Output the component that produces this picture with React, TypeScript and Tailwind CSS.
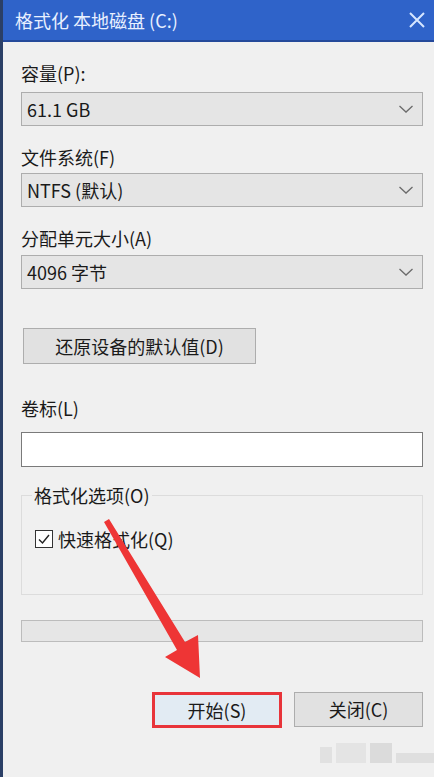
const font = { fontFamily: '"Noto Sans CJK SC", "Noto Sans", sans-serif' };

function Chevron() {
  return (
    <svg width="16" height="10" viewBox="0 0 16 10">
      <path d="M1.5 2 L8 8 L14.5 2" fill="none" stroke="#6b6b6b" strokeWidth="1.3" />
    </svg>
  );
}

function Combo({ value, className }: { value: string; className?: string }) {
  return (
    <div
      className={`flex h-[34px] items-center justify-between border border-[#adadad] bg-[#e5e5e5] pl-[5px] pr-[8px] text-[18px] text-[#1a1a1a] ${className ?? ""}`}
    >
      <span>{value}</span>
      <Chevron />
    </div>
  );
}

function Label({ text, className }: { text: string; className?: string }) {
  return <div className={`h-[22px] text-[18px] leading-[22px] text-[#1a1a1a] ${className ?? ""}`}>{text}</div>;
}

export default function App() {
  return (
    <div className="relative h-[782px] w-[434px] overflow-hidden bg-white" style={font}>
      <div className="flex h-[777px] flex-col border-l-[3px] border-[#2b3f66] bg-[#f0f0f0]">
        <div className="flex h-[42px] shrink-0 items-center justify-between border-b-2 border-[#24499a] bg-[#2f63c9] pl-[12px] pr-[9px]">
          <span className="text-[18px] text-[#e8f0ff]">格式化 本地磁盘 (C:)</span>
          <svg width="16" height="16" viewBox="0 0 16 16">
            <path d="M1 1 L15 15 M15 1 L1 15" stroke="#d6e6ff" strokeWidth="2" />
          </svg>
        </div>

        <div className="flex flex-col pl-[18px] pr-[11px]">
          <Label text="容量(P):" className="mt-[20px]" />
          <Combo value="61.1 GB" className="mt-[8px]" />
          <Label text="文件系统(F)" className="mt-[20px]" />
          <Combo value="NTFS (默认)" className="mt-[5px]" />
          <Label text="分配单元大小(A)" className="mt-[20px]" />
          <Combo value="4096 字节" className="mt-[6px]" />

          <div className="ml-[2px] mt-[39px] flex h-[36px] w-[233px] items-center justify-center self-start border border-[#adadad] bg-[#e1e1e1] text-[18px] text-[#1a1a1a]">
            还原设备的默认值(D)
          </div>

          <Label text="卷标(L)" className="mt-[33px]" />
          <div className="mt-[13px] h-[35px] border border-[#7a7a7a] bg-white" />

          <div className="relative mt-[28px] h-[100px] border border-[#dcdcdc]">
            <span className="absolute -top-[12px] left-[10px] bg-[#f0f0f0] px-[2px] text-[18px] leading-[22px] text-[#1a1a1a]">
              格式化选项(O)
            </span>
            <div className="ml-[13px] mt-[32px] flex items-center gap-[5px]">
              <div className="flex h-[18px] w-[18px] items-center justify-center border border-[#333] bg-white">
                <svg width="14" height="14" viewBox="0 0 14 14">
                  <path d="M2 7.5 L5.5 11 L12 3" fill="none" stroke="#222" strokeWidth="1.4" />
                </svg>
              </div>
              <span className="text-[18px] leading-[22px] text-[#1a1a1a]">快速格式化(Q)</span>
            </div>
          </div>

          <div className="mt-[25px] h-[22px] border border-[#bcbcbc] bg-[#e6e6e6]" />

          <div className="mt-[50px] flex justify-end gap-[12px]">
            <div className="flex h-[36px] w-[130px] items-center justify-center border-[3px] border-[#e8343a] bg-[#e2ebf3] text-[18px] text-[#1a1a1a]">
              开始(S)
            </div>
            <div className="flex h-[35px] w-[129px] items-center justify-center border border-[#adadad] bg-[#e1e1e1] text-[18px] text-[#1a1a1a]">
              关闭(C)
            </div>
          </div>

          <div className="mr-[-11px] mt-[15px] flex justify-end gap-[4px] opacity-50">
            <div className="h-[16px] w-[12px] self-end bg-[#d4d4d4]" />
            <div className="h-[20px] w-[30px] bg-[#dadada]" />
            <div className="h-[20px] w-[22px] bg-[#c8c8c8]" />
            <div className="h-[10px] w-[38px] self-end bg-[#cfcfcf]" />
          </div>
        </div>
      </div>

      <svg className="pointer-events-none absolute left-0 top-0" width="434" height="782">
        <polygon
          points="104,522 109,519 185,642 198,635 200,678 165,657 177,650"
          fill="#ee3535"
        />
      </svg>
    </div>
  );
}
